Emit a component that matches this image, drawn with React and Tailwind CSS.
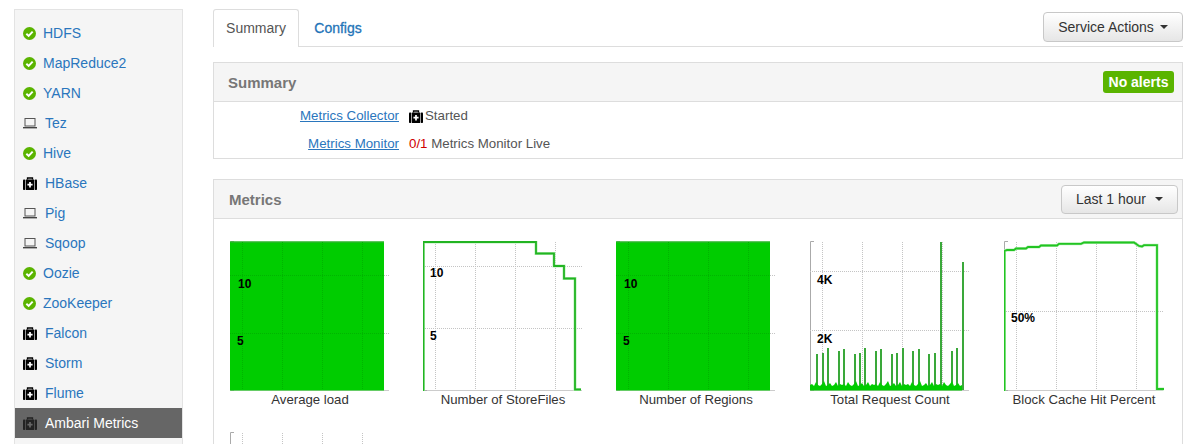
import React from 'react';

const SERVICES = [
  { name: 'HDFS', status: 'ok' },
  { name: 'MapReduce2', status: 'ok' },
  { name: 'YARN', status: 'ok' },
  { name: 'Tez', status: 'client' },
  { name: 'Hive', status: 'ok' },
  { name: 'HBase', status: 'medkit' },
  { name: 'Pig', status: 'client' },
  { name: 'Sqoop', status: 'client' },
  { name: 'Oozie', status: 'ok' },
  { name: 'ZooKeeper', status: 'ok' },
  { name: 'Falcon', status: 'medkit' },
  { name: 'Storm', status: 'medkit' },
  { name: 'Flume', status: 'medkit' },
  { name: 'Ambari Metrics', status: 'medkit', active: true },
];

const GREEN = '#00cc00';

// spikes for the request count chart: x offset, top y
const SPIKES = [
  [7, 113], [13, 112], [18, 107], [29, 110], [34, 108], [45, 113], [50, 112], [55, 107],
  [66, 110], [71, 108], [82, 113], [87, 112], [93, 107], [103, 110], [109, 108], [119, 113],
  [125, 112], [131, 1], [142, 110], [147, 107], [153, 21],
];

// jagged base of the request count chart
const BUMPS = [144, 143, 145, 141, 144, 145, 143, 140, 145, 144, 142, 145, 144, 141, 145, 143];
const BASE = Array.from({ length: 77 }, (_, i) => `L${i * 2} ${BUMPS[i % BUMPS.length]}`).join(' ');

const CheckIcon = () => (
  <svg width="13" height="13" viewBox="0 0 14 14">
    <circle cx="7" cy="7" r="7" fill="#5ab400" />
    <path d="M3.6 7.2 L6.1 9.6 L10.4 5" fill="none" stroke="#fff" strokeWidth="2.1" />
  </svg>
);

const LaptopIcon = () => (
  <svg width="14" height="11" viewBox="0 0 14 11">
    <rect x="2" y="0.5" width="10" height="7.5" fill="none" stroke="#555" />
    <path d="M0 9.7 H14" stroke="#444" strokeWidth="1.4" />
  </svg>
);

const MedkitIcon = ({ dim }) => {
  const fill = dim ? '#222' : '#000';
  return (
    <svg width="14" height="13" viewBox="0 0 14 13">
      <path d="M4.5 2.5 V1 H9.5 V2.5" fill="none" stroke={fill} strokeWidth="1.3" />
      <rect x="0" y="2.5" width="2.3" height="10.5" rx="0.8" fill={fill} />
      <rect x="2.9" y="2.5" width="8.2" height="10.5" fill={fill} />
      <rect x="11.7" y="2.5" width="2.3" height="10.5" rx="0.8" fill={fill} />
      <path d="M7 5 V10.4 M4.4 7.7 H9.6" stroke={dim ? '#666' : '#fff'} strokeWidth="1.7" />
    </svg>
  );
};

const StatusIcon = ({ status, dim }) => {
  if (status === 'ok') return <CheckIcon />;
  if (status === 'medkit') return <MedkitIcon dim={dim} />;
  return <LaptopIcon />;
};

const Caret = () => (
  <span className="inline-block w-0 h-0 border-x-4 border-x-transparent border-t-4 border-t-[#333]" />
);

const Button = ({ label, className }) => (
  <button className={`flex items-center justify-center rounded-[4px] border border-[#c8c8c8] bg-gradient-to-b from-white to-[#e6e6e6] text-[14px] text-[#333] ${className}`}>
    {label}
  </button>
);

const Chart = ({ title, ticks, children, hLines }) => (
  <div className="w-[175px]">
    <svg width="175" height="150" viewBox="0 0 175 150" className="block">
      <path d="M0.5 0.5 H4 M0.5 0.5 V149.5 M0.5 149.5 H4" fill="none" stroke="#aaa" />
      <path d="M4 149.5 H159" stroke="#ccc" />
      {hLines.map((y) => (
        <line key={y} x1="0" x2="159" y1={y} y2={y} stroke="#c4c4c4" strokeDasharray="1 1" />
      ))}
      {[12.5, 52.5, 92.5, 132.5].map((x) => (
        <line key={x} x1={x} x2={x} y1="1" y2="149" stroke="#c4c4c4" strokeDasharray="1 1" />
      ))}
      {children}
      {ticks.map((t) => (
        <text key={t.label} x={t.x} y={t.y} fontSize="12" fontWeight="700" fill="#000">{t.label}</text>
      ))}
    </svg>
    <div className="w-[160px] text-center text-[13.2px] leading-[18px] text-[#333] whitespace-nowrap">{title}</div>
  </div>
);

const SolidFill = () => (
  <g>
    <rect x="0" y="0.5" width="154" height="149" fill={GREEN} />
    <path d="M0.5 1 H154" stroke="#3fa93f" />
    {[12.5, 52.5, 92.5, 132.5].map((x) => (
      <line key={x} x1={x} x2={x} y1="1" y2="149" stroke="#00b400" strokeDasharray="1 1" />
    ))}
    {[34.5, 92.5].map((y) => (
      <line key={y} x1="0" x2="154" y1={y} y2={y} stroke="#00b400" strokeDasharray="1 1" />
    ))}
  </g>
);

const StepLine = ({ d, color }) => (
  <g>
    <path d={d} fill="none" stroke="#b8f0b8" strokeWidth="3" />
    <path d={d} fill="none" stroke={color} strokeWidth="1.8" />
  </g>
);

const App = () => {
  return (
    <div className="h-[444px] overflow-hidden bg-white text-[14px] text-[#333] flex gap-[30px] pl-[14px] pr-[11px] pt-[9px]" style={{ fontFamily: '"Liberation Sans", Arial, sans-serif' }}>
      {/* Service list */}
      <div className="w-[169px] shrink-0 self-start border border-b-0 border-[#e3e3e3] bg-[#f5f5f5] pt-[8px] h-[435px]">
        {SERVICES.map((s) => (
          <div key={s.name} className={`flex h-[30px] items-center pl-[8px] ${s.active ? 'bg-[#666] text-white' : 'text-[#2a76bd]'}`}>
            <span className="flex w-[22px] shrink-0 items-center"><StatusIcon status={s.status} dim={s.active} /></span>
            <span className={s.status === 'ok' ? '-ml-[2px]' : ''}>{s.name}</span>
          </div>
        ))}
      </div>

      {/* Main column */}
      <div className="flex-1 min-w-0">
        <div className="flex h-[38px] items-stretch border-b border-[#ddd]">
          <div className="mb-[-1px] flex w-[86px] items-center justify-center rounded-t-[3px] border border-b-0 border-[#ddd] bg-white text-[#555]">Summary</div>
          <div className="flex w-[78px] items-center justify-center pt-[1px] text-[#1f74b8]" style={{ WebkitTextStroke: '0.3px' }}>Configs</div>
          <Button
            className="ml-auto h-[30px] mt-[3px] w-[140px] gap-[6px]"
            label={<>Service Actions <Caret /></>}
          />
        </div>

        {/* Summary panel */}
        <div className="mt-[15px] border border-[#ddd]">
          <div className="flex h-[39px] items-center justify-between border-b border-[#ddd] bg-[#f5f5f5] pl-[14px] pr-[8px]">
            <span className="pt-[2px] text-[15px] font-bold text-[#777]">Summary</span>
            <span className="flex h-[22px] w-[71px] items-center justify-center rounded-[3px] bg-[#5ab400] text-[14px] font-bold text-white">No alerts</span>
          </div>
          <div className="text-[#555]">
            <div className="flex h-[28px] items-center">
              <a className="w-[185px] text-right text-[13.3px] text-[#2a76bd] underline">Metrics Collector</a>
              <span className="ml-[10px] flex items-center gap-[2px] text-[13.3px]"><MedkitIcon />Started</span>
            </div>
            <div className="flex h-[28px] items-center">
              <a className="w-[185px] text-right text-[13.3px] text-[#2a76bd] underline">Metrics Monitor</a>
              <span className="ml-[10px] text-[13.3px]"><span className="text-[#d00000]">0/1</span> Metrics Monitor Live</span>
            </div>
          </div>
        </div>

        {/* Metrics panel */}
        <div className="mt-[20px] border border-[#ddd]">
          <div className="flex h-[39px] items-center justify-between border-b border-[#ddd] bg-[#f5f5f5] pl-[15px] pr-[4px]">
            <span className="pt-[2px] text-[15px] font-bold text-[#777]">Metrics</span>
            <Button className="h-[29px] w-[117px] gap-[9px]" label={<>Last 1 hour <Caret /></>} />
          </div>
          <div className="grid grid-cols-[193px_193px_194px_194px_175px] gap-y-[23px] pl-[16px] pt-[22px]">
            <Chart title="Average load" hLines={[34.5, 92.5]} ticks={[{ label: '10', x: 8, y: 47 }, { label: '5', x: 7, y: 104 }]}>
              <SolidFill />
            </Chart>
            <Chart title="Number of StoreFiles" hLines={[25.5, 87.5]} ticks={[{ label: '10', x: 7, y: 36 }, { label: '5', x: 7, y: 99 }]}>
              <StepLine d="M0.5 150 V1 H113 V12.5 H131 V25 H141 V37.5 H152 V148.5 H158" color="#22b422" />
            </Chart>
            <Chart title="Number of Regions" hLines={[34.5, 92.5]} ticks={[{ label: '10', x: 8, y: 47 }, { label: '5', x: 7, y: 104 }]}>
              <SolidFill />
            </Chart>
            <Chart title="Total Request Count" hLines={[30.5, 89.5]} ticks={[{ label: '4K', x: 7, y: 43 }, { label: '2K', x: 7, y: 102 }]}>
              {SPIKES.map(([x, y]) => (
                <line key={x} x1={x} x2={x} y1={y} y2="149" stroke="#3aa83a" strokeWidth="2" />
              ))}
              <path d={`M0 149.5 ${BASE} L152 149.5 Z`} fill={GREEN} />
            </Chart>
            <Chart title="Block Cache Hit Percent" hLines={[70.5]} ticks={[{ label: '50%', x: 7, y: 81 }]}>
              <StepLine d="M0.5 150 V10 L3 9 H10 L12 7.5 H22 L24 6 H35 L37 4.5 H53 L55 2.8 H77 L80 1.5 H130 L135 5 L138 5.5 L140 4.2 H153 V148 H160" color="#22c422" />
            </Chart>
            <Chart title="" hLines={[]} ticks={[]} />
          </div>
        </div>
      </div>
    </div>
  );
};

export default App;
